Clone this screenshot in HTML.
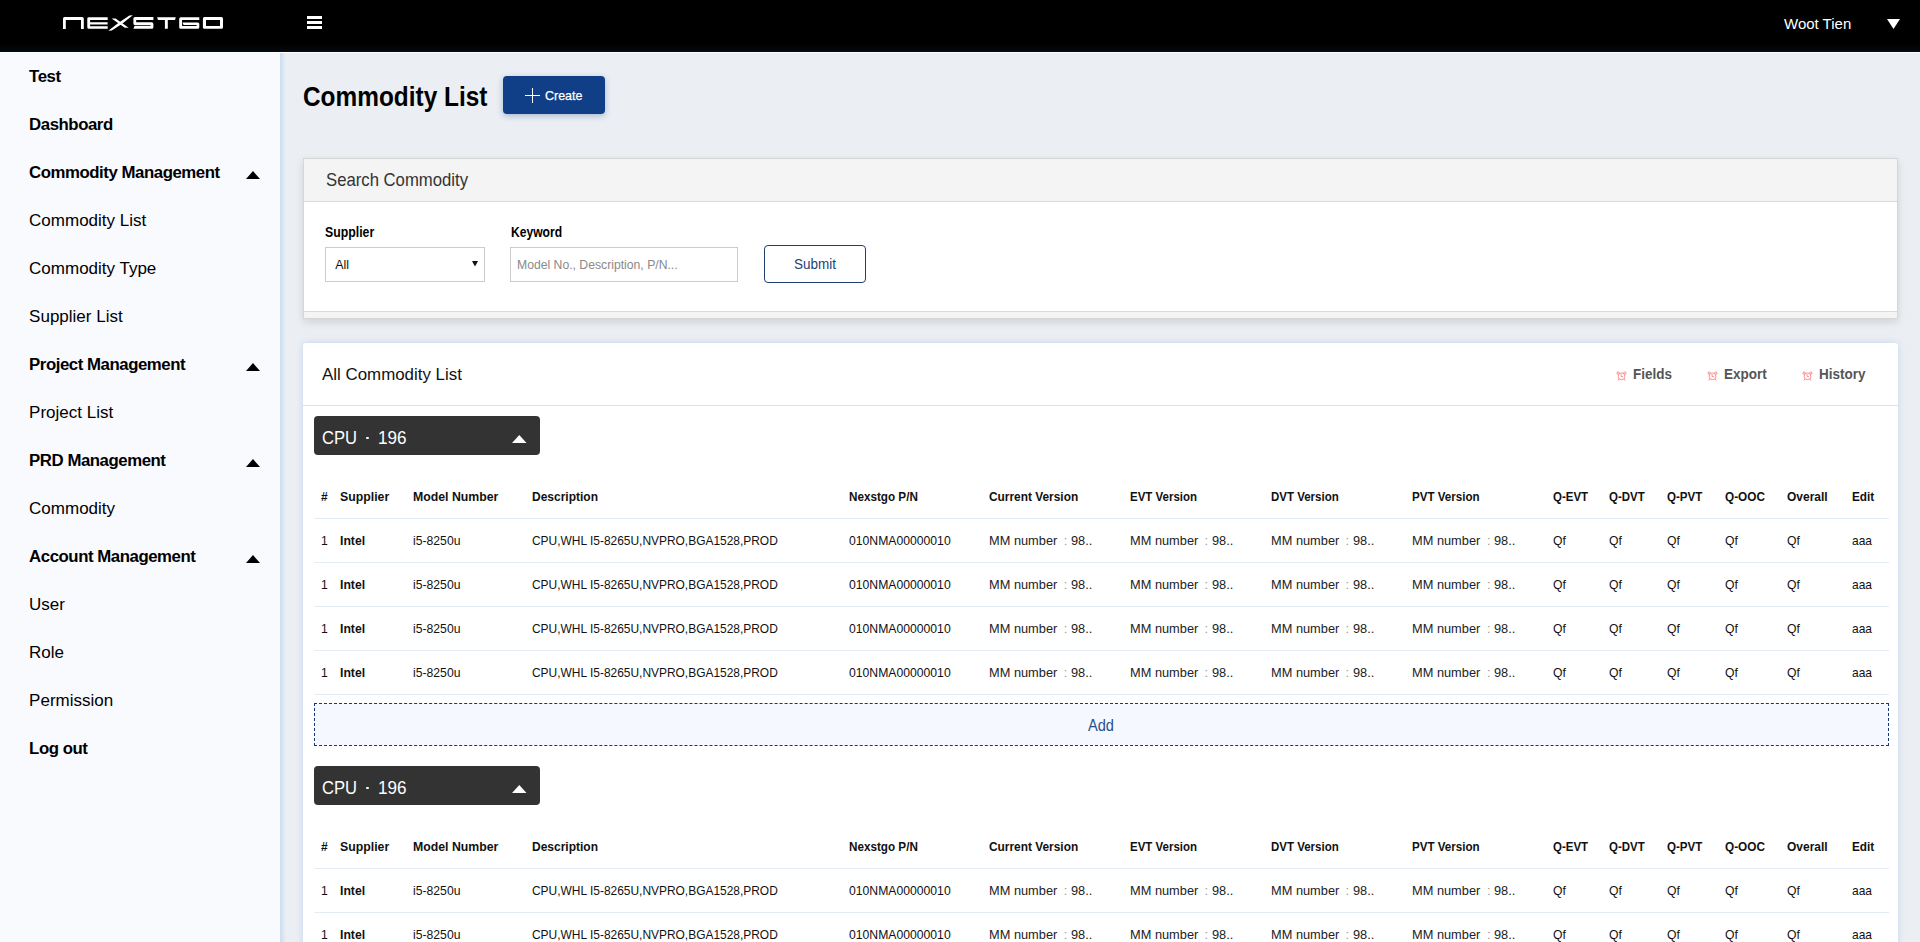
<!DOCTYPE html>
<html><head><meta charset="utf-8"><title>Commodity List</title><style>
*{margin:0;padding:0;box-sizing:border-box}
html,body{width:1920px;height:942px;overflow:hidden;background:#ebeef3;font-family:"Liberation Sans",sans-serif}
.t{position:absolute;white-space:nowrap}
.a{position:absolute}
</style></head>
<body>
<div class="a" style="left:0;top:0;width:1920px;height:52px;background:linear-gradient(#000 0,#000 45px,#020b14 52px);"></div>
<div class="a" style="left:0;top:52px;width:1920px;height:1px;background:#fff"></div>
<svg class="a" style="left:0;top:0" width="240" height="52" viewBox="0 0 240 52" fill="#fff">
<path d="M63 29V18.6Q63 17 64.6 17H82Q83.8 17 83.8 18.8V29H81V19.9H65.8V29Z"/>
<path d="M87.3 18.6Q87.3 17.3 88.8 17.3H107.7V20H90.1V22.2H107.6V24.4H90.1V26.2H107.7V28.8H89Q87.3 28.8 87.3 27.2Z"/>
<path d="M108.3 30.8L111.8 30.6Q122 24.5 132.8 15.2L129.4 15.5Q119 22 108.3 30.8Z"/>
<path d="M111.6 18.4L115.6 18.4L128.6 27.7L124.8 27.7Z"/>
<path d="M135 17H153.4V19.9H136.2V22.3H151.7Q153.4 22.3 153.4 24V27.2Q153.4 28.75 151.8 28.75H133.4L134.6 25.7H150.6V25.1H135Q133.4 25.1 133.4 23.5V18.6Q133.4 17 135 17Z"/>
<path d="M157.1 17.3H175.8L175 19.9H167.8V28.75H164.9V19.9H158Z"/>
<path d="M180.8 17.3H199.3V19.9H182.1V26H196.6V25.1H184.5Q183 25.1 182.8 23.4L182.8 22.5H197.7Q199.3 22.5 199.3 24.1V27.2Q199.3 28.75 197.7 28.75H180.8Q179.2 28.75 179.2 27.2V18.9Q179.2 17.3 180.8 17.3Z"/>
<path d="M204.5 17H221.4Q223 17 223 18.6V27.2Q223 28.75 221.4 28.75H204.5Q202.9 28.75 202.9 27.2V18.6Q202.9 17 204.5 17ZM206 19.9V25.9H220V19.9Z"/>
</svg>
<div class="a" style="left:307px;top:16px;width:15px;height:3px;background:#fff"></div>
<div class="a" style="left:307px;top:21px;width:15px;height:3px;background:#fff"></div>
<div class="a" style="left:307px;top:26px;width:15px;height:3px;background:#fff"></div>
<div class="t" style="left:1784px;top:15.36px;font-size:15.4px;line-height:17.20px;font-weight:normal;color:#fff;transform:scaleX(0.9740);transform-origin:0 0;">Woot Tien</div>
<svg class="a" style="left:1887px;top:19px" width="13" height="10" viewBox="0 0 13 10"><path d="M0 0H13L6.5 10Z" fill="#fff"/></svg>
<div class="a" style="left:0;top:53px;width:280px;height:889px;background:#f9fafe"></div>
<div class="a" style="left:280px;top:53px;width:6px;height:889px;background:linear-gradient(90deg,#c9ddef,rgba(235,238,243,0))"></div>
<div class="t" style="left:29.1px;top:67.80px;font-size:16.8px;line-height:18.77px;font-weight:bold;color:#000;letter-spacing:-0.45px">Test</div>
<div class="t" style="left:29.1px;top:115.80px;font-size:16.8px;line-height:18.77px;font-weight:bold;color:#000;letter-spacing:-0.45px">Dashboard</div>
<div class="t" style="left:29.1px;top:163.80px;font-size:16.8px;line-height:18.77px;font-weight:bold;color:#000;letter-spacing:-0.45px">Commodity Management</div>
<svg class="a" style="left:246px;top:171.0px" width="14" height="8" viewBox="0 0 14 8"><path d="M0 8H14L7 0Z" fill="#000"/></svg>
<div class="t" style="left:29.1px;top:210.62px;font-size:17px;line-height:18.99px;font-weight:normal;color:#000;">Commodity List</div>
<div class="t" style="left:29.1px;top:258.62px;font-size:17px;line-height:18.99px;font-weight:normal;color:#000;">Commodity Type</div>
<div class="t" style="left:29.1px;top:306.62px;font-size:17px;line-height:18.99px;font-weight:normal;color:#000;">Supplier List</div>
<div class="t" style="left:29.1px;top:355.80px;font-size:16.8px;line-height:18.77px;font-weight:bold;color:#000;letter-spacing:-0.45px">Project Management</div>
<svg class="a" style="left:246px;top:363.0px" width="14" height="8" viewBox="0 0 14 8"><path d="M0 8H14L7 0Z" fill="#000"/></svg>
<div class="t" style="left:29.1px;top:402.62px;font-size:17px;line-height:18.99px;font-weight:normal;color:#000;">Project List</div>
<div class="t" style="left:29.1px;top:451.80px;font-size:16.8px;line-height:18.77px;font-weight:bold;color:#000;letter-spacing:-0.45px">PRD Management</div>
<svg class="a" style="left:246px;top:459.0px" width="14" height="8" viewBox="0 0 14 8"><path d="M0 8H14L7 0Z" fill="#000"/></svg>
<div class="t" style="left:29.1px;top:498.62px;font-size:17px;line-height:18.99px;font-weight:normal;color:#000;">Commodity</div>
<div class="t" style="left:29.1px;top:547.80px;font-size:16.8px;line-height:18.77px;font-weight:bold;color:#000;letter-spacing:-0.45px">Account Management</div>
<svg class="a" style="left:246px;top:555.0px" width="14" height="8" viewBox="0 0 14 8"><path d="M0 8H14L7 0Z" fill="#000"/></svg>
<div class="t" style="left:29.1px;top:594.62px;font-size:17px;line-height:18.99px;font-weight:normal;color:#000;">User</div>
<div class="t" style="left:29.1px;top:642.62px;font-size:17px;line-height:18.99px;font-weight:normal;color:#000;">Role</div>
<div class="t" style="left:29.1px;top:690.62px;font-size:17px;line-height:18.99px;font-weight:normal;color:#000;">Permission</div>
<div class="t" style="left:29.1px;top:739.80px;font-size:16.8px;line-height:18.77px;font-weight:bold;color:#000;letter-spacing:-0.45px">Log out</div>
<div class="t" style="left:303px;top:80.74px;font-size:27.8px;line-height:31.05px;font-weight:bold;color:#000;transform:scaleX(0.8780);transform-origin:0 0;">Commodity List</div>
<div class="a" style="left:503px;top:76px;width:102px;height:38px;background:#113f87;border-radius:4px;box-shadow:0 2px 6px rgba(17,63,135,.3)"></div>
<div class="a" style="left:525px;top:95px;width:15px;height:1.4px;background:#fff"></div>
<div class="a" style="left:531.8px;top:88px;width:1.3px;height:15px;background:#fff"></div>
<div class="t" style="left:544.5px;top:88.65px;font-size:13.2px;line-height:14.74px;font-weight:normal;color:#fff;-webkit-text-stroke:0.25px #fff;transform:scaleX(0.9444);transform-origin:0 0;">Create</div>
<div class="a" style="left:303px;top:158px;width:1595px;height:161px;background:#fff;border:1px solid #d6d6d6;box-shadow:0 3px 8px rgba(0,0,0,.12)"></div>
<div class="a" style="left:304px;top:159px;width:1593px;height:43px;background:#f4f4f4;border-bottom:1px solid #d9d9d9"></div>
<div class="a" style="left:304px;top:311px;width:1593px;height:7px;background:#f4f4f4;border-top:1px solid #d9d9d9"></div>
<div class="t" style="left:325.5px;top:169.52px;font-size:18.1px;line-height:20.22px;font-weight:normal;color:#333;transform:scaleX(0.9230);transform-origin:0 0;">Search Commodity</div>
<div class="t" style="left:325px;top:224.82px;font-size:13.9px;line-height:15.53px;font-weight:bold;color:#000;transform:scaleX(0.8849);transform-origin:0 0;">Supplier</div>
<div class="t" style="left:510.5px;top:224.82px;font-size:13.9px;line-height:15.53px;font-weight:bold;color:#000;transform:scaleX(0.8705);transform-origin:0 0;">Keyword</div>
<div class="a" style="left:325px;top:247px;width:160px;height:35px;background:#fff;border:1px solid #cccccc"></div>
<div class="t" style="left:335.3px;top:258.98px;font-size:12.4px;line-height:13.85px;font-weight:normal;color:#111;">All</div>
<svg class="a" style="left:472px;top:261px" width="6" height="5.5" viewBox="0 0 6 5.5"><path d="M0 0H6L3 5.5Z" fill="#111"/></svg>
<div class="a" style="left:510px;top:247px;width:228px;height:35px;background:#fff;border:1px solid #cccccc"></div>
<div class="t" style="left:516.5px;top:257.29px;font-size:13.6px;line-height:15.19px;font-weight:normal;color:#8a8a8a;transform:scaleX(0.8971);transform-origin:0 0;">Model No., Description, P/N...</div>
<div class="a" style="left:764px;top:245px;width:102px;height:38px;background:#fff;border:1.5px solid #1f3f73;border-radius:4px"></div>
<div class="t" style="left:793.5px;top:257.16px;font-size:14.3px;line-height:15.97px;font-weight:normal;color:#1f3f73;transform:scaleX(0.9441);transform-origin:0 0;">Submit</div>
<div class="a" style="left:303px;top:343px;width:1595px;height:620px;background:#fff;border-radius:3px;box-shadow:0 0 6px rgba(165,198,235,.6)"></div>
<div class="a" style="left:303px;top:405px;width:1595px;height:1px;background:#dde2ea"></div>
<div class="t" style="left:322px;top:365.71px;font-size:16.9px;line-height:18.88px;font-weight:normal;color:#111;">All Commodity List</div>
<svg class="a" style="left:1615.5px;top:370.5px" width="11" height="10" viewBox="0 0 11 10" fill="none" stroke="#ff8f8f" stroke-width="1"><circle cx="5.5" cy="5.3" r="3.4"/><path d="M5.1 3.1V5.6H7"/><circle cx="2.1" cy="2.1" r="1.2"/><circle cx="8.9" cy="2.1" r="1.2"/><path d="M2.7 7.9L1.9 9.5M8.3 7.9L9.1 9.5"/></svg>
<div class="t" style="left:1633px;top:364.74px;font-size:15.2px;line-height:16.98px;font-weight:bold;color:#555;transform:scaleX(0.8882);transform-origin:0 0;">Fields</div>
<svg class="a" style="left:1706.5px;top:370.5px" width="11" height="10" viewBox="0 0 11 10" fill="none" stroke="#ff8f8f" stroke-width="1"><circle cx="5.5" cy="5.3" r="3.4"/><path d="M5.1 3.1V5.6H7"/><circle cx="2.1" cy="2.1" r="1.2"/><circle cx="8.9" cy="2.1" r="1.2"/><path d="M2.7 7.9L1.9 9.5M8.3 7.9L9.1 9.5"/></svg>
<div class="t" style="left:1723.5px;top:364.74px;font-size:15.2px;line-height:16.98px;font-weight:bold;color:#555;transform:scaleX(0.8882);transform-origin:0 0;">Export</div>
<svg class="a" style="left:1802px;top:370.5px" width="11" height="10" viewBox="0 0 11 10" fill="none" stroke="#ff8f8f" stroke-width="1"><circle cx="5.5" cy="5.3" r="3.4"/><path d="M5.1 3.1V5.6H7"/><circle cx="2.1" cy="2.1" r="1.2"/><circle cx="8.9" cy="2.1" r="1.2"/><path d="M2.7 7.9L1.9 9.5M8.3 7.9L9.1 9.5"/></svg>
<div class="t" style="left:1818.5px;top:364.74px;font-size:15.2px;line-height:16.98px;font-weight:bold;color:#555;transform:scaleX(0.8882);transform-origin:0 0;">History</div>
<div class="a" style="left:314px;top:416px;width:226px;height:38.5px;background:#333;border-radius:4px"></div>
<div class="t" style="left:322px;top:427.94px;font-size:18.3px;line-height:20.44px;font-weight:normal;color:#fff;transform:scaleX(0.9071);transform-origin:0 0;">CPU</div>
<div class="a" style="left:366.2px;top:436.8px;width:3px;height:2.6px;background:#fff;border-radius:1px"></div>
<div class="t" style="left:377.6px;top:427.94px;font-size:18.3px;line-height:20.44px;font-weight:normal;color:#fff;transform:scaleX(0.9344);transform-origin:0 0;">196</div>
<svg class="a" style="left:512px;top:434.5px" width="14.5" height="8" viewBox="0 0 14.5 8"><path d="M0 8H14.5L7.25 0Z" fill="#fff"/></svg>
<div class="t" style="left:320.5px;top:490.05px;font-size:13.2px;line-height:14.74px;font-weight:bold;color:#111;transform:scaleX(0.9091);transform-origin:0 0;">#</div>
<div class="t" style="left:339.5px;top:490.05px;font-size:13.2px;line-height:14.74px;font-weight:bold;color:#111;transform:scaleX(0.9318);transform-origin:0 0;">Supplier</div>
<div class="t" style="left:412.6px;top:490.05px;font-size:13.2px;line-height:14.74px;font-weight:bold;color:#111;transform:scaleX(0.9318);transform-origin:0 0;">Model Number</div>
<div class="t" style="left:531.75px;top:490.05px;font-size:13.2px;line-height:14.74px;font-weight:bold;color:#111;transform:scaleX(0.9091);transform-origin:0 0;">Description</div>
<div class="t" style="left:848.75px;top:490.05px;font-size:13.2px;line-height:14.74px;font-weight:bold;color:#111;transform:scaleX(0.8864);transform-origin:0 0;">Nexstgo P/N</div>
<div class="t" style="left:988.75px;top:490.05px;font-size:13.2px;line-height:14.74px;font-weight:bold;color:#111;transform:scaleX(0.9015);transform-origin:0 0;">Current Version</div>
<div class="t" style="left:1129.6px;top:490.05px;font-size:13.2px;line-height:14.74px;font-weight:bold;color:#111;transform:scaleX(0.8712);transform-origin:0 0;">EVT Version</div>
<div class="t" style="left:1270.5px;top:490.05px;font-size:13.2px;line-height:14.74px;font-weight:bold;color:#111;transform:scaleX(0.8712);transform-origin:0 0;">DVT Version</div>
<div class="t" style="left:1411.9px;top:490.05px;font-size:13.2px;line-height:14.74px;font-weight:bold;color:#111;transform:scaleX(0.8788);transform-origin:0 0;">PVT Version</div>
<div class="t" style="left:1552.5px;top:490.05px;font-size:13.2px;line-height:14.74px;font-weight:bold;color:#111;transform:scaleX(0.8712);transform-origin:0 0;">Q-EVT</div>
<div class="t" style="left:1608.5px;top:490.05px;font-size:13.2px;line-height:14.74px;font-weight:bold;color:#111;transform:scaleX(0.8712);transform-origin:0 0;">Q-DVT</div>
<div class="t" style="left:1666.5px;top:490.05px;font-size:13.2px;line-height:14.74px;font-weight:bold;color:#111;transform:scaleX(0.8788);transform-origin:0 0;">Q-PVT</div>
<div class="t" style="left:1724.5px;top:490.05px;font-size:13.2px;line-height:14.74px;font-weight:bold;color:#111;transform:scaleX(0.8939);transform-origin:0 0;">Q-OOC</div>
<div class="t" style="left:1787.4px;top:490.05px;font-size:13.2px;line-height:14.74px;font-weight:bold;color:#111;transform:scaleX(0.9091);transform-origin:0 0;">Overall</div>
<div class="t" style="left:1851.8px;top:490.05px;font-size:13.2px;line-height:14.74px;font-weight:bold;color:#111;transform:scaleX(0.8939);transform-origin:0 0;">Edit</div>
<div class="a" style="left:314px;top:518px;width:1575px;height:1px;background:#e4edf7"></div>
<div class="a" style="left:314px;top:562px;width:1575px;height:1px;background:#e4edf7"></div>
<div class="a" style="left:314px;top:606px;width:1575px;height:1px;background:#e4edf7"></div>
<div class="a" style="left:314px;top:650px;width:1575px;height:1px;background:#e4edf7"></div>
<div class="a" style="left:314px;top:694px;width:1575px;height:1px;background:#e4edf7"></div>
<div class="t" style="left:320.5px;top:534.33px;font-size:12.9px;line-height:14.41px;font-weight:normal;color:#111;transform:scaleX(0.9457);transform-origin:0 0;">1</div>
<div class="t" style="left:339.5px;top:534.33px;font-size:12.9px;line-height:14.41px;font-weight:bold;color:#111;transform:scaleX(0.9457);transform-origin:0 0;">Intel</div>
<div class="t" style="left:412.6px;top:534.33px;font-size:12.9px;line-height:14.41px;font-weight:normal;color:#111;transform:scaleX(0.9457);transform-origin:0 0;">i5-8250u</div>
<div class="t" style="left:531.75px;top:534.33px;font-size:12.9px;line-height:14.41px;font-weight:normal;color:#111;transform:scaleX(0.9264);transform-origin:0 0;">CPU,WHL I5-8265U,NVPRO,BGA1528,PROD</div>
<div class="t" style="left:848.75px;top:534.33px;font-size:12.9px;line-height:14.41px;font-weight:normal;color:#111;transform:scaleX(0.9457);transform-origin:0 0;">010NMA00000010</div>
<div class="t" style="left:988.75px;top:533.96px;font-size:13.3px;line-height:14.86px;font-weight:normal;color:#222;transform:scaleX(0.9624);transform-origin:0 0;">MM number</div>
<div class="t" style="left:1063.75px;top:534.42px;font-size:12.8px;line-height:14.30px;font-weight:normal;color:#999;">:</div>
<div class="t" style="left:1071.25px;top:533.96px;font-size:13.3px;line-height:14.86px;font-weight:normal;color:#222;transform:scaleX(0.9624);transform-origin:0 0;">98..</div>
<div class="t" style="left:1129.6px;top:533.96px;font-size:13.3px;line-height:14.86px;font-weight:normal;color:#222;transform:scaleX(0.9624);transform-origin:0 0;">MM number</div>
<div class="t" style="left:1204.6px;top:534.42px;font-size:12.8px;line-height:14.30px;font-weight:normal;color:#999;">:</div>
<div class="t" style="left:1212.1px;top:533.96px;font-size:13.3px;line-height:14.86px;font-weight:normal;color:#222;transform:scaleX(0.9624);transform-origin:0 0;">98..</div>
<div class="t" style="left:1270.5px;top:533.96px;font-size:13.3px;line-height:14.86px;font-weight:normal;color:#222;transform:scaleX(0.9624);transform-origin:0 0;">MM number</div>
<div class="t" style="left:1345.5px;top:534.42px;font-size:12.8px;line-height:14.30px;font-weight:normal;color:#999;">:</div>
<div class="t" style="left:1353.0px;top:533.96px;font-size:13.3px;line-height:14.86px;font-weight:normal;color:#222;transform:scaleX(0.9624);transform-origin:0 0;">98..</div>
<div class="t" style="left:1411.9px;top:533.96px;font-size:13.3px;line-height:14.86px;font-weight:normal;color:#222;transform:scaleX(0.9624);transform-origin:0 0;">MM number</div>
<div class="t" style="left:1486.9px;top:534.42px;font-size:12.8px;line-height:14.30px;font-weight:normal;color:#999;">:</div>
<div class="t" style="left:1494.4px;top:533.96px;font-size:13.3px;line-height:14.86px;font-weight:normal;color:#222;transform:scaleX(0.9624);transform-origin:0 0;">98..</div>
<div class="t" style="left:1552.5px;top:534.33px;font-size:12.9px;line-height:14.41px;font-weight:normal;color:#111;transform:scaleX(0.9457);transform-origin:0 0;">Qf</div>
<div class="t" style="left:1608.5px;top:534.33px;font-size:12.9px;line-height:14.41px;font-weight:normal;color:#111;transform:scaleX(0.9457);transform-origin:0 0;">Qf</div>
<div class="t" style="left:1666.5px;top:534.33px;font-size:12.9px;line-height:14.41px;font-weight:normal;color:#111;transform:scaleX(0.9457);transform-origin:0 0;">Qf</div>
<div class="t" style="left:1724.5px;top:534.33px;font-size:12.9px;line-height:14.41px;font-weight:normal;color:#111;transform:scaleX(0.9457);transform-origin:0 0;">Qf</div>
<div class="t" style="left:1787.4px;top:534.33px;font-size:12.9px;line-height:14.41px;font-weight:normal;color:#111;transform:scaleX(0.9457);transform-origin:0 0;">Qf</div>
<div class="t" style="left:1851.8px;top:534.33px;font-size:12.9px;line-height:14.41px;font-weight:normal;color:#111;transform:scaleX(0.9302);transform-origin:0 0;">aaa</div>
<div class="t" style="left:320.5px;top:578.33px;font-size:12.9px;line-height:14.41px;font-weight:normal;color:#111;transform:scaleX(0.9457);transform-origin:0 0;">1</div>
<div class="t" style="left:339.5px;top:578.33px;font-size:12.9px;line-height:14.41px;font-weight:bold;color:#111;transform:scaleX(0.9457);transform-origin:0 0;">Intel</div>
<div class="t" style="left:412.6px;top:578.33px;font-size:12.9px;line-height:14.41px;font-weight:normal;color:#111;transform:scaleX(0.9457);transform-origin:0 0;">i5-8250u</div>
<div class="t" style="left:531.75px;top:578.33px;font-size:12.9px;line-height:14.41px;font-weight:normal;color:#111;transform:scaleX(0.9264);transform-origin:0 0;">CPU,WHL I5-8265U,NVPRO,BGA1528,PROD</div>
<div class="t" style="left:848.75px;top:578.33px;font-size:12.9px;line-height:14.41px;font-weight:normal;color:#111;transform:scaleX(0.9457);transform-origin:0 0;">010NMA00000010</div>
<div class="t" style="left:988.75px;top:577.96px;font-size:13.3px;line-height:14.86px;font-weight:normal;color:#222;transform:scaleX(0.9624);transform-origin:0 0;">MM number</div>
<div class="t" style="left:1063.75px;top:578.42px;font-size:12.8px;line-height:14.30px;font-weight:normal;color:#999;">:</div>
<div class="t" style="left:1071.25px;top:577.96px;font-size:13.3px;line-height:14.86px;font-weight:normal;color:#222;transform:scaleX(0.9624);transform-origin:0 0;">98..</div>
<div class="t" style="left:1129.6px;top:577.96px;font-size:13.3px;line-height:14.86px;font-weight:normal;color:#222;transform:scaleX(0.9624);transform-origin:0 0;">MM number</div>
<div class="t" style="left:1204.6px;top:578.42px;font-size:12.8px;line-height:14.30px;font-weight:normal;color:#999;">:</div>
<div class="t" style="left:1212.1px;top:577.96px;font-size:13.3px;line-height:14.86px;font-weight:normal;color:#222;transform:scaleX(0.9624);transform-origin:0 0;">98..</div>
<div class="t" style="left:1270.5px;top:577.96px;font-size:13.3px;line-height:14.86px;font-weight:normal;color:#222;transform:scaleX(0.9624);transform-origin:0 0;">MM number</div>
<div class="t" style="left:1345.5px;top:578.42px;font-size:12.8px;line-height:14.30px;font-weight:normal;color:#999;">:</div>
<div class="t" style="left:1353.0px;top:577.96px;font-size:13.3px;line-height:14.86px;font-weight:normal;color:#222;transform:scaleX(0.9624);transform-origin:0 0;">98..</div>
<div class="t" style="left:1411.9px;top:577.96px;font-size:13.3px;line-height:14.86px;font-weight:normal;color:#222;transform:scaleX(0.9624);transform-origin:0 0;">MM number</div>
<div class="t" style="left:1486.9px;top:578.42px;font-size:12.8px;line-height:14.30px;font-weight:normal;color:#999;">:</div>
<div class="t" style="left:1494.4px;top:577.96px;font-size:13.3px;line-height:14.86px;font-weight:normal;color:#222;transform:scaleX(0.9624);transform-origin:0 0;">98..</div>
<div class="t" style="left:1552.5px;top:578.33px;font-size:12.9px;line-height:14.41px;font-weight:normal;color:#111;transform:scaleX(0.9457);transform-origin:0 0;">Qf</div>
<div class="t" style="left:1608.5px;top:578.33px;font-size:12.9px;line-height:14.41px;font-weight:normal;color:#111;transform:scaleX(0.9457);transform-origin:0 0;">Qf</div>
<div class="t" style="left:1666.5px;top:578.33px;font-size:12.9px;line-height:14.41px;font-weight:normal;color:#111;transform:scaleX(0.9457);transform-origin:0 0;">Qf</div>
<div class="t" style="left:1724.5px;top:578.33px;font-size:12.9px;line-height:14.41px;font-weight:normal;color:#111;transform:scaleX(0.9457);transform-origin:0 0;">Qf</div>
<div class="t" style="left:1787.4px;top:578.33px;font-size:12.9px;line-height:14.41px;font-weight:normal;color:#111;transform:scaleX(0.9457);transform-origin:0 0;">Qf</div>
<div class="t" style="left:1851.8px;top:578.33px;font-size:12.9px;line-height:14.41px;font-weight:normal;color:#111;transform:scaleX(0.9302);transform-origin:0 0;">aaa</div>
<div class="t" style="left:320.5px;top:622.33px;font-size:12.9px;line-height:14.41px;font-weight:normal;color:#111;transform:scaleX(0.9457);transform-origin:0 0;">1</div>
<div class="t" style="left:339.5px;top:622.33px;font-size:12.9px;line-height:14.41px;font-weight:bold;color:#111;transform:scaleX(0.9457);transform-origin:0 0;">Intel</div>
<div class="t" style="left:412.6px;top:622.33px;font-size:12.9px;line-height:14.41px;font-weight:normal;color:#111;transform:scaleX(0.9457);transform-origin:0 0;">i5-8250u</div>
<div class="t" style="left:531.75px;top:622.33px;font-size:12.9px;line-height:14.41px;font-weight:normal;color:#111;transform:scaleX(0.9264);transform-origin:0 0;">CPU,WHL I5-8265U,NVPRO,BGA1528,PROD</div>
<div class="t" style="left:848.75px;top:622.33px;font-size:12.9px;line-height:14.41px;font-weight:normal;color:#111;transform:scaleX(0.9457);transform-origin:0 0;">010NMA00000010</div>
<div class="t" style="left:988.75px;top:621.96px;font-size:13.3px;line-height:14.86px;font-weight:normal;color:#222;transform:scaleX(0.9624);transform-origin:0 0;">MM number</div>
<div class="t" style="left:1063.75px;top:622.42px;font-size:12.8px;line-height:14.30px;font-weight:normal;color:#999;">:</div>
<div class="t" style="left:1071.25px;top:621.96px;font-size:13.3px;line-height:14.86px;font-weight:normal;color:#222;transform:scaleX(0.9624);transform-origin:0 0;">98..</div>
<div class="t" style="left:1129.6px;top:621.96px;font-size:13.3px;line-height:14.86px;font-weight:normal;color:#222;transform:scaleX(0.9624);transform-origin:0 0;">MM number</div>
<div class="t" style="left:1204.6px;top:622.42px;font-size:12.8px;line-height:14.30px;font-weight:normal;color:#999;">:</div>
<div class="t" style="left:1212.1px;top:621.96px;font-size:13.3px;line-height:14.86px;font-weight:normal;color:#222;transform:scaleX(0.9624);transform-origin:0 0;">98..</div>
<div class="t" style="left:1270.5px;top:621.96px;font-size:13.3px;line-height:14.86px;font-weight:normal;color:#222;transform:scaleX(0.9624);transform-origin:0 0;">MM number</div>
<div class="t" style="left:1345.5px;top:622.42px;font-size:12.8px;line-height:14.30px;font-weight:normal;color:#999;">:</div>
<div class="t" style="left:1353.0px;top:621.96px;font-size:13.3px;line-height:14.86px;font-weight:normal;color:#222;transform:scaleX(0.9624);transform-origin:0 0;">98..</div>
<div class="t" style="left:1411.9px;top:621.96px;font-size:13.3px;line-height:14.86px;font-weight:normal;color:#222;transform:scaleX(0.9624);transform-origin:0 0;">MM number</div>
<div class="t" style="left:1486.9px;top:622.42px;font-size:12.8px;line-height:14.30px;font-weight:normal;color:#999;">:</div>
<div class="t" style="left:1494.4px;top:621.96px;font-size:13.3px;line-height:14.86px;font-weight:normal;color:#222;transform:scaleX(0.9624);transform-origin:0 0;">98..</div>
<div class="t" style="left:1552.5px;top:622.33px;font-size:12.9px;line-height:14.41px;font-weight:normal;color:#111;transform:scaleX(0.9457);transform-origin:0 0;">Qf</div>
<div class="t" style="left:1608.5px;top:622.33px;font-size:12.9px;line-height:14.41px;font-weight:normal;color:#111;transform:scaleX(0.9457);transform-origin:0 0;">Qf</div>
<div class="t" style="left:1666.5px;top:622.33px;font-size:12.9px;line-height:14.41px;font-weight:normal;color:#111;transform:scaleX(0.9457);transform-origin:0 0;">Qf</div>
<div class="t" style="left:1724.5px;top:622.33px;font-size:12.9px;line-height:14.41px;font-weight:normal;color:#111;transform:scaleX(0.9457);transform-origin:0 0;">Qf</div>
<div class="t" style="left:1787.4px;top:622.33px;font-size:12.9px;line-height:14.41px;font-weight:normal;color:#111;transform:scaleX(0.9457);transform-origin:0 0;">Qf</div>
<div class="t" style="left:1851.8px;top:622.33px;font-size:12.9px;line-height:14.41px;font-weight:normal;color:#111;transform:scaleX(0.9302);transform-origin:0 0;">aaa</div>
<div class="t" style="left:320.5px;top:666.33px;font-size:12.9px;line-height:14.41px;font-weight:normal;color:#111;transform:scaleX(0.9457);transform-origin:0 0;">1</div>
<div class="t" style="left:339.5px;top:666.33px;font-size:12.9px;line-height:14.41px;font-weight:bold;color:#111;transform:scaleX(0.9457);transform-origin:0 0;">Intel</div>
<div class="t" style="left:412.6px;top:666.33px;font-size:12.9px;line-height:14.41px;font-weight:normal;color:#111;transform:scaleX(0.9457);transform-origin:0 0;">i5-8250u</div>
<div class="t" style="left:531.75px;top:666.33px;font-size:12.9px;line-height:14.41px;font-weight:normal;color:#111;transform:scaleX(0.9264);transform-origin:0 0;">CPU,WHL I5-8265U,NVPRO,BGA1528,PROD</div>
<div class="t" style="left:848.75px;top:666.33px;font-size:12.9px;line-height:14.41px;font-weight:normal;color:#111;transform:scaleX(0.9457);transform-origin:0 0;">010NMA00000010</div>
<div class="t" style="left:988.75px;top:665.96px;font-size:13.3px;line-height:14.86px;font-weight:normal;color:#222;transform:scaleX(0.9624);transform-origin:0 0;">MM number</div>
<div class="t" style="left:1063.75px;top:666.42px;font-size:12.8px;line-height:14.30px;font-weight:normal;color:#999;">:</div>
<div class="t" style="left:1071.25px;top:665.96px;font-size:13.3px;line-height:14.86px;font-weight:normal;color:#222;transform:scaleX(0.9624);transform-origin:0 0;">98..</div>
<div class="t" style="left:1129.6px;top:665.96px;font-size:13.3px;line-height:14.86px;font-weight:normal;color:#222;transform:scaleX(0.9624);transform-origin:0 0;">MM number</div>
<div class="t" style="left:1204.6px;top:666.42px;font-size:12.8px;line-height:14.30px;font-weight:normal;color:#999;">:</div>
<div class="t" style="left:1212.1px;top:665.96px;font-size:13.3px;line-height:14.86px;font-weight:normal;color:#222;transform:scaleX(0.9624);transform-origin:0 0;">98..</div>
<div class="t" style="left:1270.5px;top:665.96px;font-size:13.3px;line-height:14.86px;font-weight:normal;color:#222;transform:scaleX(0.9624);transform-origin:0 0;">MM number</div>
<div class="t" style="left:1345.5px;top:666.42px;font-size:12.8px;line-height:14.30px;font-weight:normal;color:#999;">:</div>
<div class="t" style="left:1353.0px;top:665.96px;font-size:13.3px;line-height:14.86px;font-weight:normal;color:#222;transform:scaleX(0.9624);transform-origin:0 0;">98..</div>
<div class="t" style="left:1411.9px;top:665.96px;font-size:13.3px;line-height:14.86px;font-weight:normal;color:#222;transform:scaleX(0.9624);transform-origin:0 0;">MM number</div>
<div class="t" style="left:1486.9px;top:666.42px;font-size:12.8px;line-height:14.30px;font-weight:normal;color:#999;">:</div>
<div class="t" style="left:1494.4px;top:665.96px;font-size:13.3px;line-height:14.86px;font-weight:normal;color:#222;transform:scaleX(0.9624);transform-origin:0 0;">98..</div>
<div class="t" style="left:1552.5px;top:666.33px;font-size:12.9px;line-height:14.41px;font-weight:normal;color:#111;transform:scaleX(0.9457);transform-origin:0 0;">Qf</div>
<div class="t" style="left:1608.5px;top:666.33px;font-size:12.9px;line-height:14.41px;font-weight:normal;color:#111;transform:scaleX(0.9457);transform-origin:0 0;">Qf</div>
<div class="t" style="left:1666.5px;top:666.33px;font-size:12.9px;line-height:14.41px;font-weight:normal;color:#111;transform:scaleX(0.9457);transform-origin:0 0;">Qf</div>
<div class="t" style="left:1724.5px;top:666.33px;font-size:12.9px;line-height:14.41px;font-weight:normal;color:#111;transform:scaleX(0.9457);transform-origin:0 0;">Qf</div>
<div class="t" style="left:1787.4px;top:666.33px;font-size:12.9px;line-height:14.41px;font-weight:normal;color:#111;transform:scaleX(0.9457);transform-origin:0 0;">Qf</div>
<div class="t" style="left:1851.8px;top:666.33px;font-size:12.9px;line-height:14.41px;font-weight:normal;color:#111;transform:scaleX(0.9302);transform-origin:0 0;">aaa</div>
<div class="a" style="left:314px;top:703px;width:1575px;height:43px;background:#f5f9ff;border:1px dashed #12387a"></div>
<div class="t" style="left:1087.5px;top:716.68px;font-size:15.6px;line-height:17.43px;font-weight:normal;color:#2a4f86;transform:scaleX(0.9359);transform-origin:0 0;">Add</div>
<div class="a" style="left:314px;top:766px;width:226px;height:38.5px;background:#333;border-radius:4px"></div>
<div class="t" style="left:322px;top:777.94px;font-size:18.3px;line-height:20.44px;font-weight:normal;color:#fff;transform:scaleX(0.9071);transform-origin:0 0;">CPU</div>
<div class="a" style="left:366.2px;top:786.8px;width:3px;height:2.6px;background:#fff;border-radius:1px"></div>
<div class="t" style="left:377.6px;top:777.94px;font-size:18.3px;line-height:20.44px;font-weight:normal;color:#fff;transform:scaleX(0.9344);transform-origin:0 0;">196</div>
<svg class="a" style="left:512px;top:784.5px" width="14.5" height="8" viewBox="0 0 14.5 8"><path d="M0 8H14.5L7.25 0Z" fill="#fff"/></svg>
<div class="t" style="left:320.5px;top:840.05px;font-size:13.2px;line-height:14.74px;font-weight:bold;color:#111;transform:scaleX(0.9091);transform-origin:0 0;">#</div>
<div class="t" style="left:339.5px;top:840.05px;font-size:13.2px;line-height:14.74px;font-weight:bold;color:#111;transform:scaleX(0.9318);transform-origin:0 0;">Supplier</div>
<div class="t" style="left:412.6px;top:840.05px;font-size:13.2px;line-height:14.74px;font-weight:bold;color:#111;transform:scaleX(0.9318);transform-origin:0 0;">Model Number</div>
<div class="t" style="left:531.75px;top:840.05px;font-size:13.2px;line-height:14.74px;font-weight:bold;color:#111;transform:scaleX(0.9091);transform-origin:0 0;">Description</div>
<div class="t" style="left:848.75px;top:840.05px;font-size:13.2px;line-height:14.74px;font-weight:bold;color:#111;transform:scaleX(0.8864);transform-origin:0 0;">Nexstgo P/N</div>
<div class="t" style="left:988.75px;top:840.05px;font-size:13.2px;line-height:14.74px;font-weight:bold;color:#111;transform:scaleX(0.9015);transform-origin:0 0;">Current Version</div>
<div class="t" style="left:1129.6px;top:840.05px;font-size:13.2px;line-height:14.74px;font-weight:bold;color:#111;transform:scaleX(0.8712);transform-origin:0 0;">EVT Version</div>
<div class="t" style="left:1270.5px;top:840.05px;font-size:13.2px;line-height:14.74px;font-weight:bold;color:#111;transform:scaleX(0.8712);transform-origin:0 0;">DVT Version</div>
<div class="t" style="left:1411.9px;top:840.05px;font-size:13.2px;line-height:14.74px;font-weight:bold;color:#111;transform:scaleX(0.8788);transform-origin:0 0;">PVT Version</div>
<div class="t" style="left:1552.5px;top:840.05px;font-size:13.2px;line-height:14.74px;font-weight:bold;color:#111;transform:scaleX(0.8712);transform-origin:0 0;">Q-EVT</div>
<div class="t" style="left:1608.5px;top:840.05px;font-size:13.2px;line-height:14.74px;font-weight:bold;color:#111;transform:scaleX(0.8712);transform-origin:0 0;">Q-DVT</div>
<div class="t" style="left:1666.5px;top:840.05px;font-size:13.2px;line-height:14.74px;font-weight:bold;color:#111;transform:scaleX(0.8788);transform-origin:0 0;">Q-PVT</div>
<div class="t" style="left:1724.5px;top:840.05px;font-size:13.2px;line-height:14.74px;font-weight:bold;color:#111;transform:scaleX(0.8939);transform-origin:0 0;">Q-OOC</div>
<div class="t" style="left:1787.4px;top:840.05px;font-size:13.2px;line-height:14.74px;font-weight:bold;color:#111;transform:scaleX(0.9091);transform-origin:0 0;">Overall</div>
<div class="t" style="left:1851.8px;top:840.05px;font-size:13.2px;line-height:14.74px;font-weight:bold;color:#111;transform:scaleX(0.8939);transform-origin:0 0;">Edit</div>
<div class="a" style="left:314px;top:868px;width:1575px;height:1px;background:#e4edf7"></div>
<div class="a" style="left:314px;top:912px;width:1575px;height:1px;background:#e4edf7"></div>
<div class="a" style="left:314px;top:956px;width:1575px;height:1px;background:#e4edf7"></div>
<div class="a" style="left:314px;top:1000px;width:1575px;height:1px;background:#e4edf7"></div>
<div class="a" style="left:314px;top:1044px;width:1575px;height:1px;background:#e4edf7"></div>
<div class="t" style="left:320.5px;top:884.33px;font-size:12.9px;line-height:14.41px;font-weight:normal;color:#111;transform:scaleX(0.9457);transform-origin:0 0;">1</div>
<div class="t" style="left:339.5px;top:884.33px;font-size:12.9px;line-height:14.41px;font-weight:bold;color:#111;transform:scaleX(0.9457);transform-origin:0 0;">Intel</div>
<div class="t" style="left:412.6px;top:884.33px;font-size:12.9px;line-height:14.41px;font-weight:normal;color:#111;transform:scaleX(0.9457);transform-origin:0 0;">i5-8250u</div>
<div class="t" style="left:531.75px;top:884.33px;font-size:12.9px;line-height:14.41px;font-weight:normal;color:#111;transform:scaleX(0.9264);transform-origin:0 0;">CPU,WHL I5-8265U,NVPRO,BGA1528,PROD</div>
<div class="t" style="left:848.75px;top:884.33px;font-size:12.9px;line-height:14.41px;font-weight:normal;color:#111;transform:scaleX(0.9457);transform-origin:0 0;">010NMA00000010</div>
<div class="t" style="left:988.75px;top:883.96px;font-size:13.3px;line-height:14.86px;font-weight:normal;color:#222;transform:scaleX(0.9624);transform-origin:0 0;">MM number</div>
<div class="t" style="left:1063.75px;top:884.42px;font-size:12.8px;line-height:14.30px;font-weight:normal;color:#999;">:</div>
<div class="t" style="left:1071.25px;top:883.96px;font-size:13.3px;line-height:14.86px;font-weight:normal;color:#222;transform:scaleX(0.9624);transform-origin:0 0;">98..</div>
<div class="t" style="left:1129.6px;top:883.96px;font-size:13.3px;line-height:14.86px;font-weight:normal;color:#222;transform:scaleX(0.9624);transform-origin:0 0;">MM number</div>
<div class="t" style="left:1204.6px;top:884.42px;font-size:12.8px;line-height:14.30px;font-weight:normal;color:#999;">:</div>
<div class="t" style="left:1212.1px;top:883.96px;font-size:13.3px;line-height:14.86px;font-weight:normal;color:#222;transform:scaleX(0.9624);transform-origin:0 0;">98..</div>
<div class="t" style="left:1270.5px;top:883.96px;font-size:13.3px;line-height:14.86px;font-weight:normal;color:#222;transform:scaleX(0.9624);transform-origin:0 0;">MM number</div>
<div class="t" style="left:1345.5px;top:884.42px;font-size:12.8px;line-height:14.30px;font-weight:normal;color:#999;">:</div>
<div class="t" style="left:1353.0px;top:883.96px;font-size:13.3px;line-height:14.86px;font-weight:normal;color:#222;transform:scaleX(0.9624);transform-origin:0 0;">98..</div>
<div class="t" style="left:1411.9px;top:883.96px;font-size:13.3px;line-height:14.86px;font-weight:normal;color:#222;transform:scaleX(0.9624);transform-origin:0 0;">MM number</div>
<div class="t" style="left:1486.9px;top:884.42px;font-size:12.8px;line-height:14.30px;font-weight:normal;color:#999;">:</div>
<div class="t" style="left:1494.4px;top:883.96px;font-size:13.3px;line-height:14.86px;font-weight:normal;color:#222;transform:scaleX(0.9624);transform-origin:0 0;">98..</div>
<div class="t" style="left:1552.5px;top:884.33px;font-size:12.9px;line-height:14.41px;font-weight:normal;color:#111;transform:scaleX(0.9457);transform-origin:0 0;">Qf</div>
<div class="t" style="left:1608.5px;top:884.33px;font-size:12.9px;line-height:14.41px;font-weight:normal;color:#111;transform:scaleX(0.9457);transform-origin:0 0;">Qf</div>
<div class="t" style="left:1666.5px;top:884.33px;font-size:12.9px;line-height:14.41px;font-weight:normal;color:#111;transform:scaleX(0.9457);transform-origin:0 0;">Qf</div>
<div class="t" style="left:1724.5px;top:884.33px;font-size:12.9px;line-height:14.41px;font-weight:normal;color:#111;transform:scaleX(0.9457);transform-origin:0 0;">Qf</div>
<div class="t" style="left:1787.4px;top:884.33px;font-size:12.9px;line-height:14.41px;font-weight:normal;color:#111;transform:scaleX(0.9457);transform-origin:0 0;">Qf</div>
<div class="t" style="left:1851.8px;top:884.33px;font-size:12.9px;line-height:14.41px;font-weight:normal;color:#111;transform:scaleX(0.9302);transform-origin:0 0;">aaa</div>
<div class="t" style="left:320.5px;top:928.33px;font-size:12.9px;line-height:14.41px;font-weight:normal;color:#111;transform:scaleX(0.9457);transform-origin:0 0;">1</div>
<div class="t" style="left:339.5px;top:928.33px;font-size:12.9px;line-height:14.41px;font-weight:bold;color:#111;transform:scaleX(0.9457);transform-origin:0 0;">Intel</div>
<div class="t" style="left:412.6px;top:928.33px;font-size:12.9px;line-height:14.41px;font-weight:normal;color:#111;transform:scaleX(0.9457);transform-origin:0 0;">i5-8250u</div>
<div class="t" style="left:531.75px;top:928.33px;font-size:12.9px;line-height:14.41px;font-weight:normal;color:#111;transform:scaleX(0.9264);transform-origin:0 0;">CPU,WHL I5-8265U,NVPRO,BGA1528,PROD</div>
<div class="t" style="left:848.75px;top:928.33px;font-size:12.9px;line-height:14.41px;font-weight:normal;color:#111;transform:scaleX(0.9457);transform-origin:0 0;">010NMA00000010</div>
<div class="t" style="left:988.75px;top:927.96px;font-size:13.3px;line-height:14.86px;font-weight:normal;color:#222;transform:scaleX(0.9624);transform-origin:0 0;">MM number</div>
<div class="t" style="left:1063.75px;top:928.42px;font-size:12.8px;line-height:14.30px;font-weight:normal;color:#999;">:</div>
<div class="t" style="left:1071.25px;top:927.96px;font-size:13.3px;line-height:14.86px;font-weight:normal;color:#222;transform:scaleX(0.9624);transform-origin:0 0;">98..</div>
<div class="t" style="left:1129.6px;top:927.96px;font-size:13.3px;line-height:14.86px;font-weight:normal;color:#222;transform:scaleX(0.9624);transform-origin:0 0;">MM number</div>
<div class="t" style="left:1204.6px;top:928.42px;font-size:12.8px;line-height:14.30px;font-weight:normal;color:#999;">:</div>
<div class="t" style="left:1212.1px;top:927.96px;font-size:13.3px;line-height:14.86px;font-weight:normal;color:#222;transform:scaleX(0.9624);transform-origin:0 0;">98..</div>
<div class="t" style="left:1270.5px;top:927.96px;font-size:13.3px;line-height:14.86px;font-weight:normal;color:#222;transform:scaleX(0.9624);transform-origin:0 0;">MM number</div>
<div class="t" style="left:1345.5px;top:928.42px;font-size:12.8px;line-height:14.30px;font-weight:normal;color:#999;">:</div>
<div class="t" style="left:1353.0px;top:927.96px;font-size:13.3px;line-height:14.86px;font-weight:normal;color:#222;transform:scaleX(0.9624);transform-origin:0 0;">98..</div>
<div class="t" style="left:1411.9px;top:927.96px;font-size:13.3px;line-height:14.86px;font-weight:normal;color:#222;transform:scaleX(0.9624);transform-origin:0 0;">MM number</div>
<div class="t" style="left:1486.9px;top:928.42px;font-size:12.8px;line-height:14.30px;font-weight:normal;color:#999;">:</div>
<div class="t" style="left:1494.4px;top:927.96px;font-size:13.3px;line-height:14.86px;font-weight:normal;color:#222;transform:scaleX(0.9624);transform-origin:0 0;">98..</div>
<div class="t" style="left:1552.5px;top:928.33px;font-size:12.9px;line-height:14.41px;font-weight:normal;color:#111;transform:scaleX(0.9457);transform-origin:0 0;">Qf</div>
<div class="t" style="left:1608.5px;top:928.33px;font-size:12.9px;line-height:14.41px;font-weight:normal;color:#111;transform:scaleX(0.9457);transform-origin:0 0;">Qf</div>
<div class="t" style="left:1666.5px;top:928.33px;font-size:12.9px;line-height:14.41px;font-weight:normal;color:#111;transform:scaleX(0.9457);transform-origin:0 0;">Qf</div>
<div class="t" style="left:1724.5px;top:928.33px;font-size:12.9px;line-height:14.41px;font-weight:normal;color:#111;transform:scaleX(0.9457);transform-origin:0 0;">Qf</div>
<div class="t" style="left:1787.4px;top:928.33px;font-size:12.9px;line-height:14.41px;font-weight:normal;color:#111;transform:scaleX(0.9457);transform-origin:0 0;">Qf</div>
<div class="t" style="left:1851.8px;top:928.33px;font-size:12.9px;line-height:14.41px;font-weight:normal;color:#111;transform:scaleX(0.9302);transform-origin:0 0;">aaa</div>
<div class="t" style="left:320.5px;top:972.33px;font-size:12.9px;line-height:14.41px;font-weight:normal;color:#111;transform:scaleX(0.9457);transform-origin:0 0;">1</div>
<div class="t" style="left:339.5px;top:972.33px;font-size:12.9px;line-height:14.41px;font-weight:bold;color:#111;transform:scaleX(0.9457);transform-origin:0 0;">Intel</div>
<div class="t" style="left:412.6px;top:972.33px;font-size:12.9px;line-height:14.41px;font-weight:normal;color:#111;transform:scaleX(0.9457);transform-origin:0 0;">i5-8250u</div>
<div class="t" style="left:531.75px;top:972.33px;font-size:12.9px;line-height:14.41px;font-weight:normal;color:#111;transform:scaleX(0.9264);transform-origin:0 0;">CPU,WHL I5-8265U,NVPRO,BGA1528,PROD</div>
<div class="t" style="left:848.75px;top:972.33px;font-size:12.9px;line-height:14.41px;font-weight:normal;color:#111;transform:scaleX(0.9457);transform-origin:0 0;">010NMA00000010</div>
<div class="t" style="left:988.75px;top:971.96px;font-size:13.3px;line-height:14.86px;font-weight:normal;color:#222;transform:scaleX(0.9624);transform-origin:0 0;">MM number</div>
<div class="t" style="left:1063.75px;top:972.42px;font-size:12.8px;line-height:14.30px;font-weight:normal;color:#999;">:</div>
<div class="t" style="left:1071.25px;top:971.96px;font-size:13.3px;line-height:14.86px;font-weight:normal;color:#222;transform:scaleX(0.9624);transform-origin:0 0;">98..</div>
<div class="t" style="left:1129.6px;top:971.96px;font-size:13.3px;line-height:14.86px;font-weight:normal;color:#222;transform:scaleX(0.9624);transform-origin:0 0;">MM number</div>
<div class="t" style="left:1204.6px;top:972.42px;font-size:12.8px;line-height:14.30px;font-weight:normal;color:#999;">:</div>
<div class="t" style="left:1212.1px;top:971.96px;font-size:13.3px;line-height:14.86px;font-weight:normal;color:#222;transform:scaleX(0.9624);transform-origin:0 0;">98..</div>
<div class="t" style="left:1270.5px;top:971.96px;font-size:13.3px;line-height:14.86px;font-weight:normal;color:#222;transform:scaleX(0.9624);transform-origin:0 0;">MM number</div>
<div class="t" style="left:1345.5px;top:972.42px;font-size:12.8px;line-height:14.30px;font-weight:normal;color:#999;">:</div>
<div class="t" style="left:1353.0px;top:971.96px;font-size:13.3px;line-height:14.86px;font-weight:normal;color:#222;transform:scaleX(0.9624);transform-origin:0 0;">98..</div>
<div class="t" style="left:1411.9px;top:971.96px;font-size:13.3px;line-height:14.86px;font-weight:normal;color:#222;transform:scaleX(0.9624);transform-origin:0 0;">MM number</div>
<div class="t" style="left:1486.9px;top:972.42px;font-size:12.8px;line-height:14.30px;font-weight:normal;color:#999;">:</div>
<div class="t" style="left:1494.4px;top:971.96px;font-size:13.3px;line-height:14.86px;font-weight:normal;color:#222;transform:scaleX(0.9624);transform-origin:0 0;">98..</div>
<div class="t" style="left:1552.5px;top:972.33px;font-size:12.9px;line-height:14.41px;font-weight:normal;color:#111;transform:scaleX(0.9457);transform-origin:0 0;">Qf</div>
<div class="t" style="left:1608.5px;top:972.33px;font-size:12.9px;line-height:14.41px;font-weight:normal;color:#111;transform:scaleX(0.9457);transform-origin:0 0;">Qf</div>
<div class="t" style="left:1666.5px;top:972.33px;font-size:12.9px;line-height:14.41px;font-weight:normal;color:#111;transform:scaleX(0.9457);transform-origin:0 0;">Qf</div>
<div class="t" style="left:1724.5px;top:972.33px;font-size:12.9px;line-height:14.41px;font-weight:normal;color:#111;transform:scaleX(0.9457);transform-origin:0 0;">Qf</div>
<div class="t" style="left:1787.4px;top:972.33px;font-size:12.9px;line-height:14.41px;font-weight:normal;color:#111;transform:scaleX(0.9457);transform-origin:0 0;">Qf</div>
<div class="t" style="left:1851.8px;top:972.33px;font-size:12.9px;line-height:14.41px;font-weight:normal;color:#111;transform:scaleX(0.9302);transform-origin:0 0;">aaa</div>
<div class="t" style="left:320.5px;top:1016.33px;font-size:12.9px;line-height:14.41px;font-weight:normal;color:#111;transform:scaleX(0.9457);transform-origin:0 0;">1</div>
<div class="t" style="left:339.5px;top:1016.33px;font-size:12.9px;line-height:14.41px;font-weight:bold;color:#111;transform:scaleX(0.9457);transform-origin:0 0;">Intel</div>
<div class="t" style="left:412.6px;top:1016.33px;font-size:12.9px;line-height:14.41px;font-weight:normal;color:#111;transform:scaleX(0.9457);transform-origin:0 0;">i5-8250u</div>
<div class="t" style="left:531.75px;top:1016.33px;font-size:12.9px;line-height:14.41px;font-weight:normal;color:#111;transform:scaleX(0.9264);transform-origin:0 0;">CPU,WHL I5-8265U,NVPRO,BGA1528,PROD</div>
<div class="t" style="left:848.75px;top:1016.33px;font-size:12.9px;line-height:14.41px;font-weight:normal;color:#111;transform:scaleX(0.9457);transform-origin:0 0;">010NMA00000010</div>
<div class="t" style="left:988.75px;top:1015.96px;font-size:13.3px;line-height:14.86px;font-weight:normal;color:#222;transform:scaleX(0.9624);transform-origin:0 0;">MM number</div>
<div class="t" style="left:1063.75px;top:1016.42px;font-size:12.8px;line-height:14.30px;font-weight:normal;color:#999;">:</div>
<div class="t" style="left:1071.25px;top:1015.96px;font-size:13.3px;line-height:14.86px;font-weight:normal;color:#222;transform:scaleX(0.9624);transform-origin:0 0;">98..</div>
<div class="t" style="left:1129.6px;top:1015.96px;font-size:13.3px;line-height:14.86px;font-weight:normal;color:#222;transform:scaleX(0.9624);transform-origin:0 0;">MM number</div>
<div class="t" style="left:1204.6px;top:1016.42px;font-size:12.8px;line-height:14.30px;font-weight:normal;color:#999;">:</div>
<div class="t" style="left:1212.1px;top:1015.96px;font-size:13.3px;line-height:14.86px;font-weight:normal;color:#222;transform:scaleX(0.9624);transform-origin:0 0;">98..</div>
<div class="t" style="left:1270.5px;top:1015.96px;font-size:13.3px;line-height:14.86px;font-weight:normal;color:#222;transform:scaleX(0.9624);transform-origin:0 0;">MM number</div>
<div class="t" style="left:1345.5px;top:1016.42px;font-size:12.8px;line-height:14.30px;font-weight:normal;color:#999;">:</div>
<div class="t" style="left:1353.0px;top:1015.96px;font-size:13.3px;line-height:14.86px;font-weight:normal;color:#222;transform:scaleX(0.9624);transform-origin:0 0;">98..</div>
<div class="t" style="left:1411.9px;top:1015.96px;font-size:13.3px;line-height:14.86px;font-weight:normal;color:#222;transform:scaleX(0.9624);transform-origin:0 0;">MM number</div>
<div class="t" style="left:1486.9px;top:1016.42px;font-size:12.8px;line-height:14.30px;font-weight:normal;color:#999;">:</div>
<div class="t" style="left:1494.4px;top:1015.96px;font-size:13.3px;line-height:14.86px;font-weight:normal;color:#222;transform:scaleX(0.9624);transform-origin:0 0;">98..</div>
<div class="t" style="left:1552.5px;top:1016.33px;font-size:12.9px;line-height:14.41px;font-weight:normal;color:#111;transform:scaleX(0.9457);transform-origin:0 0;">Qf</div>
<div class="t" style="left:1608.5px;top:1016.33px;font-size:12.9px;line-height:14.41px;font-weight:normal;color:#111;transform:scaleX(0.9457);transform-origin:0 0;">Qf</div>
<div class="t" style="left:1666.5px;top:1016.33px;font-size:12.9px;line-height:14.41px;font-weight:normal;color:#111;transform:scaleX(0.9457);transform-origin:0 0;">Qf</div>
<div class="t" style="left:1724.5px;top:1016.33px;font-size:12.9px;line-height:14.41px;font-weight:normal;color:#111;transform:scaleX(0.9457);transform-origin:0 0;">Qf</div>
<div class="t" style="left:1787.4px;top:1016.33px;font-size:12.9px;line-height:14.41px;font-weight:normal;color:#111;transform:scaleX(0.9457);transform-origin:0 0;">Qf</div>
<div class="t" style="left:1851.8px;top:1016.33px;font-size:12.9px;line-height:14.41px;font-weight:normal;color:#111;transform:scaleX(0.9302);transform-origin:0 0;">aaa</div>
</body></html>
